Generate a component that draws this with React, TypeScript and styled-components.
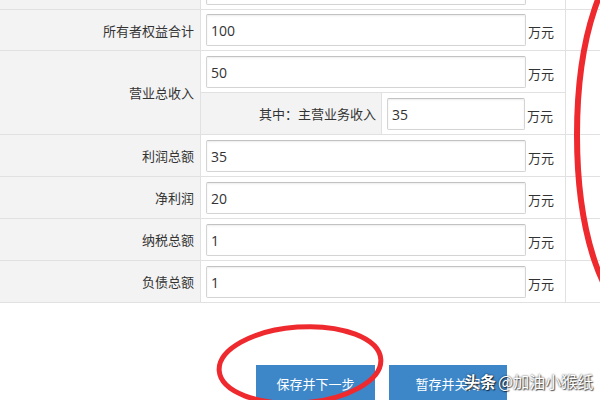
import { FC } from 'react';
import styled, { createGlobalStyle } from 'styled-components';

const Global = createGlobalStyle`
html, body { margin: 0; padding: 0; background: #fff; }
body { width: 600px; height: 400px; overflow: hidden; font-family: "Noto Sans CJK SC", sans-serif; }
`

const Page = styled.div`
position: relative;
width: 600px;
height: 400px;
overflow: hidden;
`

const Form = styled.div`
margin-top: -31px;
display: flex;
flex-direction: column;
`

const Row = styled.div`
display: grid;
grid-template-columns: 201px 365px 1fr;
border-bottom: 1px solid #e1e1e1;
`

const Label = styled.div`
background: #f3f3f3;
border-right: 1px solid #e1e1e1;
display: flex;
align-items: center;
justify-content: flex-end;
padding-right: 6px;
font: 400 13px "Noto Sans CJK SC", sans-serif;
color: #333;
`

const Value = styled.div`
border-right: 1px solid #e1e1e1;
display: flex;
flex-direction: column;
`

const Line = styled.div<{ $sub?: boolean; $h: number }>`
display: flex;
align-items: flex-end;
height: ${p => p.$h}px;
border-top: ${p => (p.$sub ? '1px solid #e1e1e1' : 'none')};
`

const SubLabel = styled.div`
width: 181px;
align-self: stretch;
background: #f3f3f3;
border-right: 1px solid #e1e1e1;
display: flex;
align-items: center;
justify-content: flex-end;
padding-right: 5px;
box-sizing: border-box;
font: 400 13px "Noto Sans CJK SC", sans-serif;
color: #333;
`

const Input = styled.input<{ $w: number }>`
box-sizing: border-box;
width: ${p => p.$w}px;
height: 32px;
margin: 0 2px 4px 5px;
padding: 0 4px;
border: 1px solid #d4d4d4;
border-top-color: #c2c2c2;
box-shadow: inset 0 1px 2px rgba(0, 0, 0, 0.08);
border-radius: 2px;
background: #fff;
font: 400 14px "Open Sans", "Noto Sans CJK SC", sans-serif;
color: #333;
outline: none;
`

const Unit = styled.span`
font: 400 13px "Noto Sans CJK SC", sans-serif;
color: #333;
line-height: 16px;
padding-bottom: 10px;
`

const Buttons = styled.div`
display: flex;
gap: 14px;
padding: 62px 0 0 256px;
`

const Button = styled.button<{ $w: number }>`
width: ${p => p.$w}px;
height: 36px;
border: none;
background: #3d87c9;
color: #fff;
font: 400 13px "Noto Sans CJK SC", sans-serif;
padding: 0;
`

const Marks = styled.svg`
position: absolute;
left: 0;
top: 0;
pointer-events: none;
`

const Watermark = styled.div`
position: absolute;
left: 464px;
top: 369px;
color: #fff;
font: 400 16px "Noto Sans CJK SC", sans-serif;
text-shadow: 0 0 2px rgba(0, 0, 0, 0.8), 1px 1px 1px rgba(0, 0, 0, 0.6);
white-space: nowrap;
b { font-weight: 700; margin-right: 2px; }
`

type Field = { label: string; value: string; h: number; unit?: boolean }

// the first row is scrolled mostly out of view
const top: Field[] = [
  { label: '', value: '', h: 40, unit: false },
  { label: '所有者权益合计', value: '100', h: 40 },
]
const bottom: Field[] = [
  { label: '利润总额', value: '35', h: 41 },
  { label: '净利润', value: '20', h: 41 },
  { label: '纳税总额', value: '1', h: 41 },
  { label: '负债总额', value: '1', h: 41 },
]

const SimpleRow: FC<Field> = ({ label, value, h, unit = true }) => (
  <Row>
    <Label>{label}</Label>
    <Value>
      <Line $h={h}>
        <Input $w={320} defaultValue={value} />
        {unit && <Unit>万元</Unit>}
      </Line>
    </Value>
    <div />
  </Row>
)

export default function App() {
  return (
    <Page>
      <Global />
      <Form>
        {top.map((f, i) => <SimpleRow key={i} {...f} />)}
        <Row>
          <Label>营业总收入</Label>
          <Value>
            <Line $h={41}>
              <Input $w={320} defaultValue="50" />
              <Unit>万元</Unit>
            </Line>
            <Line $sub $h={41}>
              <SubLabel>其中：主营业务收入</SubLabel>
              <Input $w={138} defaultValue="35" />
              <Unit>万元</Unit>
            </Line>
          </Value>
          <div />
        </Row>
        {bottom.map((f, i) => <SimpleRow key={i} {...f} />)}
      </Form>
      <Buttons>
        <Button $w={119}>保存并下一步</Button>
        <Button $w={118}>暂存并关闭</Button>
      </Buttons>
      <Marks width="600" height="400" viewBox="0 0 600 400">
        <ellipse cx="300" cy="365" rx="81" ry="38" transform="rotate(-4 300 365)" fill="none" stroke="#ee2a2f" strokeWidth="5" />
        <ellipse cx="637" cy="135" rx="60" ry="178" fill="none" stroke="#ee2a2f" strokeWidth="6" />
      </Marks>
      <Watermark><b>头条</b>@加油小猴纸</Watermark>
    </Page>
  )
}
